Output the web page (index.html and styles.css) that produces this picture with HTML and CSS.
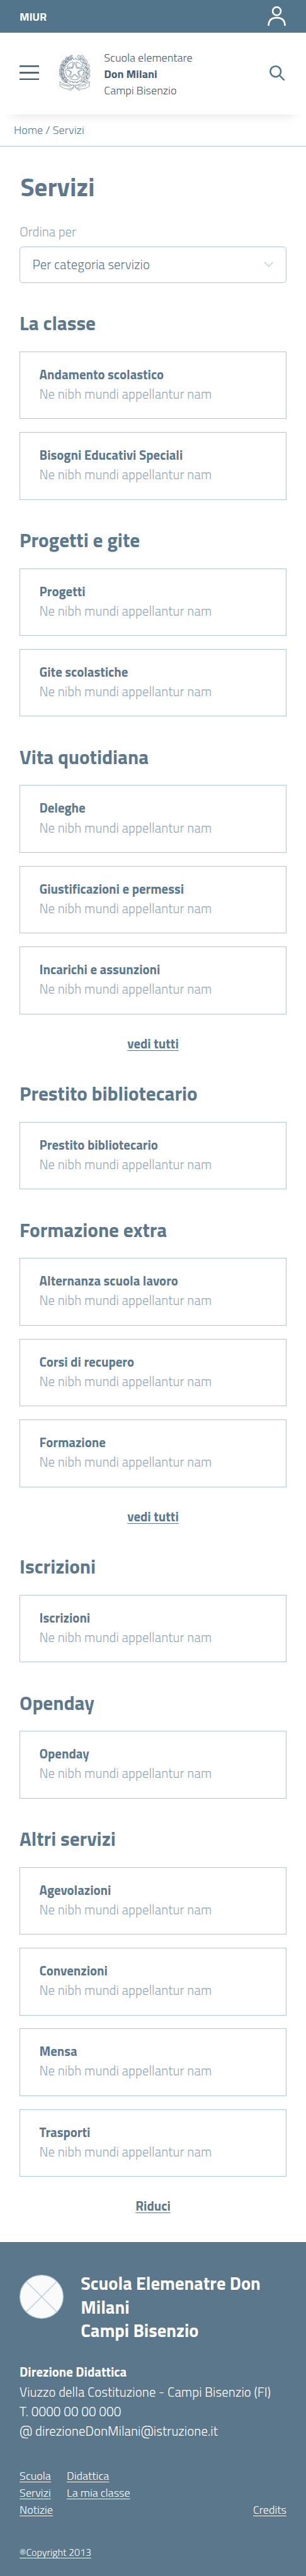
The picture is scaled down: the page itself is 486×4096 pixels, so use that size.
FILE: index.html
```html
<!DOCTYPE html>
<html lang="it">
<head>
<meta charset="utf-8">
<title>Servizi</title>
<link rel="stylesheet" href="styles.css">
</head>
<body>
<div class="topbar">
  <span class="topbar-name">MIUR</span>
  <svg class="user-icon" viewBox="0 0 48 48" fill="none" stroke="#fff" stroke-width="4"><circle cx="24" cy="12" r="10"/><path d="M4 48C4 34 12 28 24 28S44 34 44 48"/></svg>
</div>
<header class="header">
  <svg class="menu-icon" viewBox="0 0 48 36" fill="#455b72"><path d="M0 0h48v4H0zM0 16h48v4H0zM0 32h48v4H0z"/></svg>
  <svg class="emblem" viewBox="0 0 80 90" fill="none" stroke="#4a6078" stroke-width=".9">
    <defs>
      <path id="leaf" d="M0 0C-3.4-4-3-9 .5-14C3.2-9 3-4 0 0ZM0 0L.3-10"/>
      <path id="oak" d="M0 0C-4-1-2-4-4-5C-5-7-2-7-3-10C-2-13 2-13 2-10C5-9 2-7 4-5C4-2 1-2 0 0ZM0 0L0-9"/>
      <path id="sector" d="M3.4-21.7A22 22 0 0 1 19.6-10L5.6-7.7Z"/>
    </defs>
    <circle cx="39.5" cy="39" r="27.8"/>
    <circle cx="39.5" cy="39" r="29" stroke-width="3.2" pathLength="200" stroke-dasharray="5.6 4.4"/>
    <circle cx="39.5" cy="39" r="28.3" stroke="#fff" stroke-width="3" pathLength="200" stroke-dasharray="3.8 6.2" stroke-dashoffset="-.9"/>
    <path d="M39.5 19L44.2 33.2H59L47 42L51.6 56.2L39.5 47.4L27.4 56.2L32 42L20 33.2H34.8Z"/>
    <g transform="translate(39.5 39.5)">
      <use href="#sector"/><use href="#sector" transform="rotate(72)"/><use href="#sector" transform="rotate(144)"/><use href="#sector" transform="rotate(216)"/><use href="#sector" transform="rotate(288)"/>
    </g>
    <path d="M26 5C10 15 5 30 7 45C9 59 18 70 36 76M53 5C69 15 74 30 72 45C70 59 61 70 43 76"/>
    <g fill="#fff">
      <use href="#leaf" transform="translate(23 10) rotate(48)"/><use href="#leaf" transform="translate(22 11) rotate(70)"/>
      <use href="#leaf" transform="translate(16 18) rotate(18)"/><use href="#leaf" transform="translate(17 19) rotate(58)"/>
      <use href="#leaf" transform="translate(10 27) rotate(5)"/><use href="#leaf" transform="translate(12 28) rotate(44)"/>
      <use href="#leaf" transform="translate(7 37) rotate(-6)"/><use href="#leaf" transform="translate(9 38) rotate(32)"/>
      <use href="#leaf" transform="translate(7 48) rotate(-20)"/><use href="#leaf" transform="translate(8 50) rotate(20)"/>
      <use href="#leaf" transform="translate(10 58) rotate(-34)"/><use href="#leaf" transform="translate(12 60) rotate(6)"/>
      <use href="#leaf" transform="translate(18 68) rotate(-50)"/><use href="#leaf" transform="translate(20 69) rotate(-12)"/>
      <use href="#oak" transform="translate(56 10) rotate(-50)"/><use href="#oak" transform="translate(60 13) rotate(-14)"/>
      <use href="#oak" transform="translate(63 19) rotate(-52)"/><use href="#oak" transform="translate(67 23) rotate(-8)"/>
      <use href="#oak" transform="translate(68 31) rotate(-42)"/><use href="#oak" transform="translate(71 35) rotate(6)"/>
      <use href="#oak" transform="translate(70 43) rotate(-34)"/><use href="#oak" transform="translate(71 47) rotate(20)"/>
      <use href="#oak" transform="translate(68 55) rotate(-24)"/><use href="#oak" transform="translate(69 58) rotate(36)"/>
      <use href="#oak" transform="translate(61 67) rotate(-10)"/><use href="#oak" transform="translate(63 68) rotate(46)"/>
    </g>
    <path d="M37 75L26 88M40 77L29 89M42 75L53 88M39 77L50 89"/>
    <path fill="#fff" d="M3 66C13 74 25 77 38 74L36 82C24 86 13 84 4 77ZM76 66C66 74 54 77 41 74L43 82C55 86 66 84 75 77Z"/>
    <g class="motto">
      <text x="5" y="75" transform="rotate(13 5 75)">REPVBBLICA</text>
      <text x="46" y="82" transform="rotate(-14 46 82)">ITALIANA</text>
    </g>
  </svg>
  <div class="school">Scuola elementare<br><b>Don Milani</b><br>Campi Bisenzio</div>
  <svg class="search-icon" viewBox="0 0 38 38" fill="none" stroke="#52768e" stroke-width="4" stroke-linecap="round"><circle cx="15" cy="15" r="13"/><path d="M24.5 24.5L36 36"/></svg>
</header>
<nav class="breadcrumb">Home / Servizi</nav>
<main class="main">
  <h1 class="title">Servizi</h1>
  <div class="sort-label">Ordina per</div>
  <div class="select">Per categoria servizio
    <svg class="chevron" viewBox="0 0 24 14" fill="none" stroke="#cfdce6" stroke-width="3.4"><path d="M1.5 1.2L12 11.5L22.5 1.2"/></svg>
  </div>
  <section class="group">
    <h2 class="group-title">La classe</h2>
    <div class="card"><b>Andamento scolastico</b><p>Ne nibh mundi appellantur nam</p></div>
    <div class="card"><b>Bisogni Educativi Speciali</b><p>Ne nibh mundi appellantur nam</p></div>
  </section>
  <section class="group">
    <h2 class="group-title">Progetti e gite</h2>
    <div class="card"><b>Progetti</b><p>Ne nibh mundi appellantur nam</p></div>
    <div class="card"><b>Gite scolastiche</b><p>Ne nibh mundi appellantur nam</p></div>
  </section>
  <section class="group">
    <h2 class="group-title">Vita quotidiana</h2>
    <div class="card"><b>Deleghe</b><p>Ne nibh mundi appellantur nam</p></div>
    <div class="card"><b>Giustificazioni e permessi</b><p>Ne nibh mundi appellantur nam</p></div>
    <div class="card"><b>Incarichi e assunzioni</b><p>Ne nibh mundi appellantur nam</p></div>
    <div class="more"><a>vedi tutti</a></div>
  </section>
  <section class="group">
    <h2 class="group-title">Prestito bibliotecario</h2>
    <div class="card"><b>Prestito bibliotecario</b><p>Ne nibh mundi appellantur nam</p></div>
  </section>
  <section class="group">
    <h2 class="group-title">Formazione extra</h2>
    <div class="card"><b>Alternanza scuola lavoro</b><p>Ne nibh mundi appellantur nam</p></div>
    <div class="card"><b>Corsi di recupero</b><p>Ne nibh mundi appellantur nam</p></div>
    <div class="card"><b>Formazione</b><p>Ne nibh mundi appellantur nam</p></div>
    <div class="more"><a>vedi tutti</a></div>
  </section>
  <section class="group">
    <h2 class="group-title">Iscrizioni</h2>
    <div class="card"><b>Iscrizioni</b><p>Ne nibh mundi appellantur nam</p></div>
  </section>
  <section class="group">
    <h2 class="group-title">Openday</h2>
    <div class="card"><b>Openday</b><p>Ne nibh mundi appellantur nam</p></div>
  </section>
  <section class="group">
    <h2 class="group-title">Altri servizi</h2>
    <div class="card"><b>Agevolazioni</b><p>Ne nibh mundi appellantur nam</p></div>
    <div class="card"><b>Convenzioni</b><p>Ne nibh mundi appellantur nam</p></div>
    <div class="card"><b>Mensa</b><p>Ne nibh mundi appellantur nam</p></div>
    <div class="card"><b>Trasporti</b><p>Ne nibh mundi appellantur nam</p></div>
    <div class="more"><a>Riduci</a></div>
  </section>
</main>
<footer class="footer">
  <div class="footer-head">
    <svg class="footer-logo" viewBox="0 0 108 108" fill="#fafafa" stroke="#b9cbda" stroke-width="2"><circle cx="54" cy="54" r="53"/><path d="M17 17L91 91M91 17L17 91"/></svg>
    <div class="footer-title">Scuola Elemenatre Don<br>Milani<br>Campi Bisenzio</div>
  </div>
  <div class="contact"><b>Direzione Didattica</b><br>Viuzzo della Costituzione - Campi Bisenzio (FI)<br>T. 0000 00 00 000<br>@ direzioneDonMilani@istruzione.it</div>
  <div class="links">
    <div class="links-col"><a>Scuola</a><a>Servizi</a><a>Notizie</a></div>
    <div class="links-col"><a>Didattica</a><a>La mia classe</a></div>
    <div class="links-col links-end"><a>Credits</a></div>
  </div>
  <div class="copyright"><a>®Copyright 2013</a></div>
</footer>
</body>
</html>
```
FILE: styles.css
```css
/* 1rem = 10 design units; the 750-unit design is 486px wide */
html { font-size: 6.4825px; }
*, *::before, *::after { box-sizing: border-box; }
body {
  margin: 0;
  width: 486px;
  min-height: 4096px;
  display: flex;
  flex-direction: column;
  background: #fff;
  font-family: "Titillium Web", Roboto, "Open Sans", sans-serif;
  font-weight: 300;
  color: #5b788d;
}
svg { display: block; flex: none; }
b { font-weight: 700; letter-spacing: 0; }
p { margin: 0; }
.topbar {
  height: 8rem;
  padding: 0 4.8rem;
  display: flex;
  align-items: center;
  justify-content: space-between;
  background: #52758c;
}
.topbar-name { color: #fff; font-size: 2.8rem; font-weight: 700; letter-spacing: -.04rem; }
.user-icon { width: 4.8rem; height: 4.8rem; }
.header {
  height: 20rem;
  padding: 4.2rem 5.2rem 0 4.8rem;
  display: flex;
  align-items: flex-start;
  color: #455b72;
  box-shadow: 0 3rem 3rem -3rem rgba(0, 0, 0, .14);
}
.menu-icon { width: 4.8rem; height: 3.6rem; margin-top: 3.8rem; }
.emblem { width: 8rem; height: 9rem; margin: 1.2rem 3.1rem 0 4.8rem; }
.motto { fill: #4a6078; stroke: none; font: 4.9px "Liberation Serif", serif; }
.school { flex: 1; font-size: 2.8rem; line-height: 4rem; }
.search-icon { width: 3.8rem; height: 3.8rem; margin-top: 3.8rem; }
.breadcrumb {
  height: 8rem;
  padding: 1.96rem 3.4rem 0;
  font-size: 2.8rem;
  line-height: 4rem;
  letter-spacing: .01rem;
  border-bottom: 1px solid #b3c7d6;
}
.main { padding: 6rem 4.8rem 6.4rem; }
.title { margin: 0 0 4.4rem; padding-left: .2rem; font-size: 6.3rem; line-height: 8rem; font-weight: 700; }
.sort-label { font-size: 3.2rem; line-height: 4.8rem; color: #93a7b7; }
.select {
  height: 9rem;
  margin-top: 1.2rem;
  padding: 0 3rem;
  display: flex;
  align-items: center;
  justify-content: space-between;
  border: 1px solid #b3c7d6;
  border-radius: .8rem;
  font-size: 3.2rem;
  letter-spacing: .01rem;
}
.chevron { width: 2.4rem; height: 1.4rem; }
.group { display: flex; flex-direction: column; gap: 3.2rem; margin-top: 7rem; }
.group-title { margin: 0 0 .6rem; font-size: 4.8rem; line-height: 6rem; font-weight: 700; }
.card {
  height: 16.6rem;
  padding: 3.1rem 4.7rem 0;
  border: 1px solid #b3c7d6;
  font-size: 3.2rem;
  line-height: 4.8rem;
}
.card p { color: #93a7b7; letter-spacing: .015rem; }
.more { margin-top: 1.6rem; text-align: center; font-size: 3.2rem; line-height: 4.8rem; font-weight: 700; }
a { text-decoration: underline 1px; text-underline-offset: .4rem; }
.footer { flex: 1; padding: 7.26rem 4.8rem 0; background: #5b778b; color: #fff; }
.footer-head { display: flex; gap: 4.2rem; }
.footer-logo { width: 10.8rem; height: 10.8rem; margin-top: .85rem; }
.footer-title { font-size: 4.4rem; line-height: 5.8rem; font-weight: 700; }
.contact { margin-top: 4.9rem; font-size: 3.2rem; line-height: 4.8rem; letter-spacing: .013rem; white-space: nowrap; }
.links { display: flex; gap: 3.4rem; margin-top: 6.5rem; font-size: 2.8rem; line-height: 4.2rem; }
.links-col { display: flex; flex-direction: column; align-items: flex-start; }
.links-end { margin-left: auto; justify-content: flex-end; }
.copyright { margin-top: 6.6rem; font-size: 2.48rem; line-height: 3.6rem; }
```
